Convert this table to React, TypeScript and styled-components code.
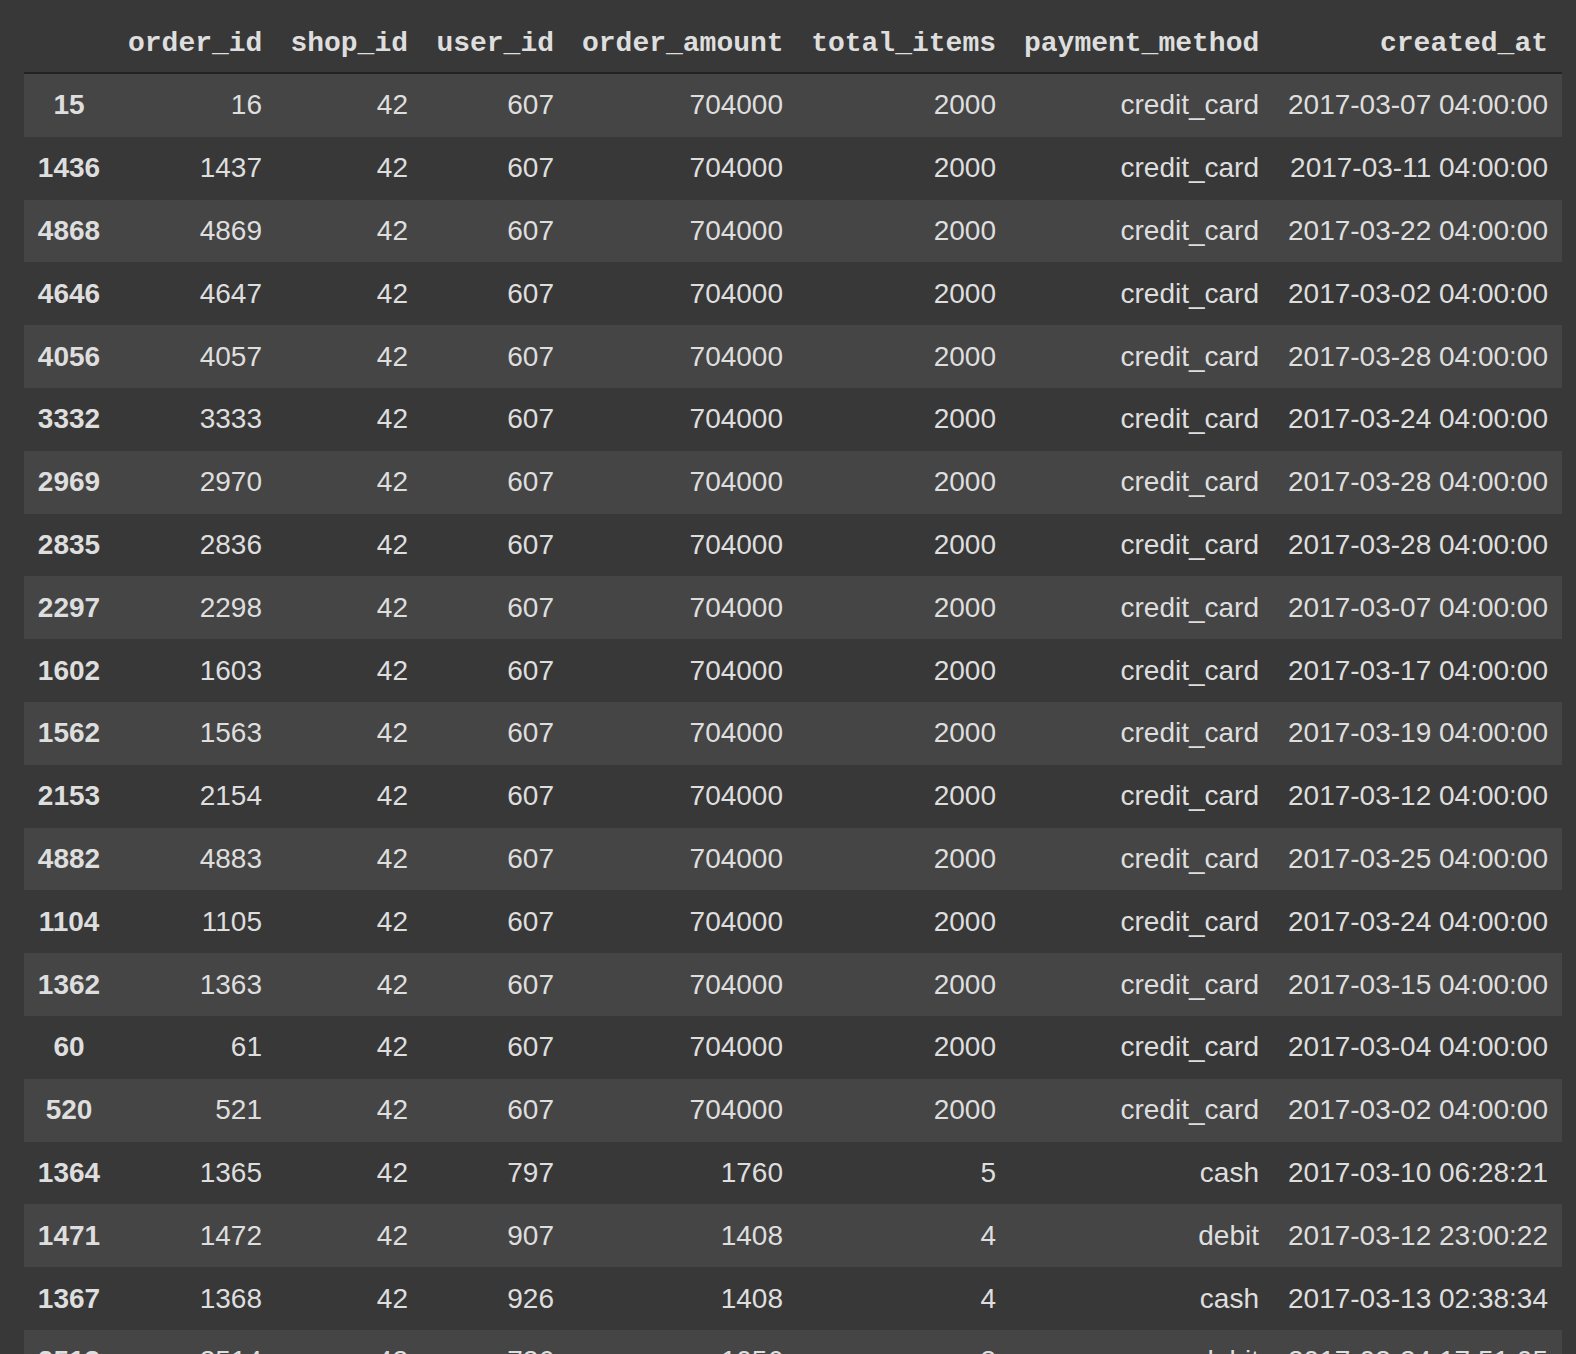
import React from 'react';
import styled, { createGlobalStyle } from 'styled-components';

type Row = [string, string, string, string, string, string, string, string];

const columns = ['order_id', 'shop_id', 'user_id', 'order_amount', 'total_items', 'payment_method', 'created_at'];
const widths = [90, 162, 146, 146, 229, 213, 263, 289];

const big = (idx: string, date: string): Row => [
  idx,
  String(Number(idx) + 1),
  '42',
  '607',
  '704000',
  '2000',
  'credit_card',
  `2017-03-${date} 04:00:00`,
];

const rows: Row[] = [
  big('15', '07'),
  big('1436', '11'),
  big('4868', '22'),
  big('4646', '02'),
  big('4056', '28'),
  big('3332', '24'),
  big('2969', '28'),
  big('2835', '28'),
  big('2297', '07'),
  big('1602', '17'),
  big('1562', '19'),
  big('2153', '12'),
  big('4882', '25'),
  big('1104', '24'),
  big('1362', '15'),
  big('60', '04'),
  big('520', '02'),
  ['1364', '1365', '42', '797', '1760', '5', 'cash', '2017-03-10 06:28:21'],
  ['1471', '1472', '42', '907', '1408', '4', 'debit', '2017-03-12 23:00:22'],
  ['1367', '1368', '42', '926', '1408', '4', 'cash', '2017-03-13 02:38:34'],
  ['2513', '2514', '42', '726', '1056', '3', 'debit', '2017-03-24 17:51:05'],
];

const GlobalStyle = createGlobalStyle`
  html, body {
    margin: 0;
    padding: 0;
    background: #383838;
  }
`;

const Page = styled.div`
  min-height: 100vh;
  padding-left: 24px;
  background: #383838;
  color: #dedede;
  overflow: hidden;
`;

const Table = styled.table`
  border-collapse: separate;
  border-spacing: 0;
  table-layout: fixed;
  width: 1538px;
`;

const Col = styled.col<{ $w: number }>`
  width: ${(p) => p.$w}px;
`;

const HeadCell = styled.th`
  box-sizing: border-box;
  height: 74px;
  padding: 0 14px 13px;
  vertical-align: bottom;
  text-align: right;
  font-family: 'Liberation Mono', 'Courier New', monospace;
  font-weight: 700;
  font-size: 28px;
  line-height: normal;
  white-space: nowrap;
  color: #dedede;
  border-bottom: 2px solid #222222;
`;

const BodyRow = styled.tr<{ $shade: boolean }>`
  background: ${(p) => (p.$shade ? '#454545' : '#383838')};
`;

const IndexCell = styled.th`
  box-sizing: border-box;
  height: 62.8px;
  padding: 0 4px;
  text-align: center;
  vertical-align: middle;
  font-family: 'Liberation Sans', Arial, sans-serif;
  font-weight: 700;
  font-size: 28px;
  white-space: nowrap;
`;

const Cell = styled.td`
  box-sizing: border-box;
  height: 62.8px;
  padding: 0 14px;
  text-align: right;
  vertical-align: middle;
  font-family: 'Liberation Sans', Arial, sans-serif;
  font-size: 28px;
  white-space: nowrap;
`;

export default function App() {
  return (
    <Page>
      <GlobalStyle />
      <Table>
        <colgroup>
          {widths.map((w, i) => (
            <Col key={i} $w={w} />
          ))}
        </colgroup>
        <thead>
          <tr>
            <HeadCell />
            {columns.map((c) => (
              <HeadCell key={c}>{c}</HeadCell>
            ))}
          </tr>
        </thead>
        <tbody>
          {rows.map((r, i) => (
            <BodyRow key={r[0]} $shade={i % 2 === 0}>
              <IndexCell>{r[0]}</IndexCell>
              {r.slice(1).map((v, j) => (
                <Cell key={j}>{v}</Cell>
              ))}
            </BodyRow>
          ))}
        </tbody>
      </Table>
    </Page>
  );
}
